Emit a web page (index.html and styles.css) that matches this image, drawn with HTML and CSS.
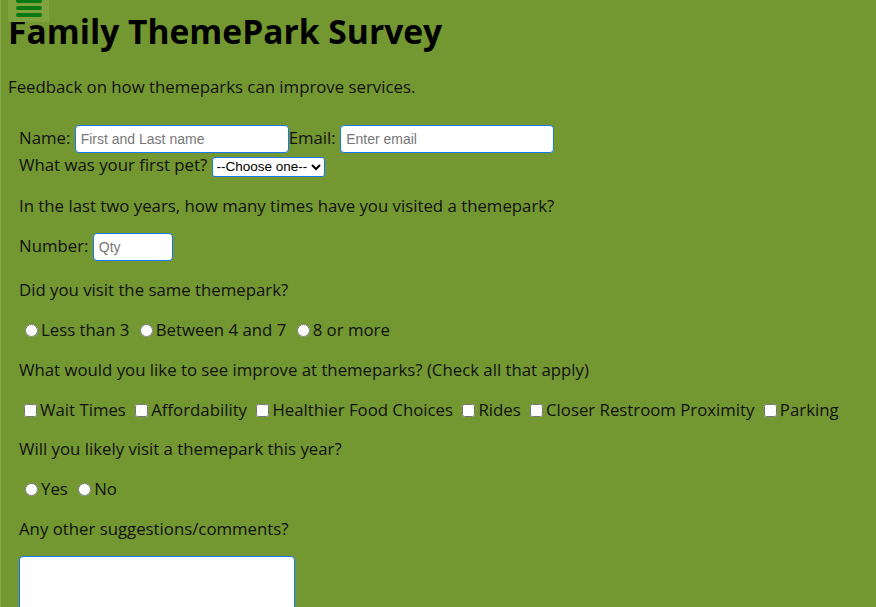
FILE: index.html
```html
<!DOCTYPE html>
<html>
<head>
<meta charset="utf-8">
<title>Family ThemePark Survey</title>
<link rel="stylesheet" href="styles.css">
</head>
<body>
<button class="menu" aria-label="Menu"><span></span><span></span><span></span></button>
<h1 class="title">Family ThemePark Survey</h1>
<p class="intro">Feedback on how themeparks can improve services.</p>
<form class="survey">
  <div class="row">
    <label>Name: <input class="field wide" type="text" placeholder="First and Last name"></label><label>Email: <input class="field wide" type="email" placeholder="Enter email"></label>
  </div>
  <div class="row">
    <label>What was your first pet? <select class="pick"><option>--Choose one--</option><option>Dog</option><option>Cat</option></select></label>
  </div>
  <p class="q">In the last two years, how many times have you visited a themepark?</p>
  <p class="q"><label>Number: <input class="field qty" type="text" placeholder="Qty"></label></p>
  <p class="q">Did you visit the same themepark?</p>
  <p class="q opts"><label><input class="radio" type="radio" name="v">Less than 3</label> <label><input class="radio" type="radio" name="v">Between 4 and 7</label> <label><input class="radio" type="radio" name="v">8 or more</label></p>
  <p class="q">What would you like to see improve at themeparks? (Check all that apply)</p>
  <p class="q opts"><label><input type="checkbox">Wait Times</label> <label><input type="checkbox">Affordability</label> <label><input type="checkbox">Healthier Food Choices</label> <label><input type="checkbox">Rides</label> <label><input type="checkbox">Closer Restroom Proximity</label> <label><input type="checkbox">Parking</label></p>
  <p class="q">Will you likely visit a themepark this year?</p>
  <p class="q opts"><label><input class="radio" type="radio" name="y">Yes</label> <label><input class="radio" type="radio" name="y">No</label></p>
  <p class="q">Any other suggestions/comments?</p>
  <textarea class="comments"></textarea>
</form>
</body>
</html>
```
FILE: styles.css
```css
html {
  background: #739731;
  box-shadow: inset 1px 0 0 #85a84a;
  min-height: 100%;
}
body {
  margin: 8px;
  font-family: "Open Sans", sans-serif;
  font-size: 16.8px;
  color: #111;
}
.menu {
  position: absolute;
  top: -5px;
  left: 8px;
  width: 41px;
  height: 27px;
  padding: 4px 7px 0 8px;
  border: 0;
  background: #7fa43f;
  display: flex;
  flex-direction: column;
  gap: 3px;
}
.menu span {
  display: block;
  width: 26px;
  height: 4px;
  border-radius: 2px;
  background: #0b7a12;
}
.title {
  margin: 0 0 20.5px;
  font-size: 2em;
  font-weight: 700;
  color: #000;
}
.intro { margin: 0 0 1em; }
.survey {
  padding: 11px 11px 10px;
}
.field {
  font-family: "Liberation Sans", Arial, sans-serif;
  font-size: 14px;
  height: 28px;
  box-sizing: border-box;
  padding: 4px 5px;
  border: 1px solid #1679f0;
  border-radius: 4px;
  background: #fff;
  vertical-align: middle;
  margin: 0;
}
.field::placeholder { color: #777; }
.wide { width: 214px; }
.qty { width: 80px; }
.pick {
  font-family: "Liberation Sans", Arial, sans-serif;
  font-size: 13.5px;
  height: 20px;
  width: 113px;
  padding: 0;
  border: 1px solid #1679f0;
  border-radius: 3px;
  background: #fff;
  color: #000;
  vertical-align: middle;
}
.q { margin: 1em 0; }
.opts input { margin: 3px 3px 0 5px; vertical-align: -1px; }
.opts .radio { margin-left: 6px; }
.comments {
  display: block;
  width: 276px;
  height: 70px;
  box-sizing: border-box;
  border: 1px solid #1679f0;
  border-radius: 4px;
  background: #fff;
  margin: -1px 0 0;
}
```
